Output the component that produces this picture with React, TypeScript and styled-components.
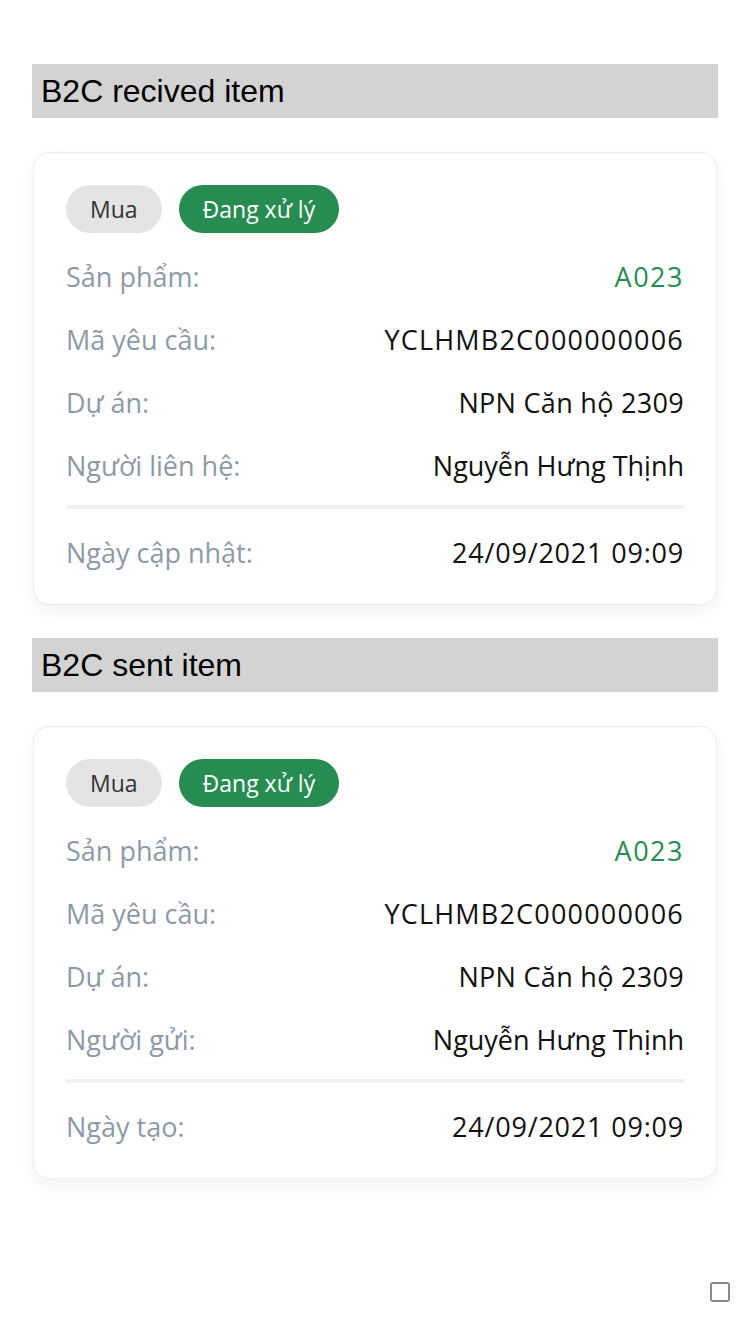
import React from "react";
import styled, { createGlobalStyle } from "styled-components";

const Global = createGlobalStyle`
  html, body { margin: 0; padding: 0; background: #fff; }
  body { font-family: "Open Sans", "Noto Sans", sans-serif; }
`;

const Page = styled.div`
  width: 750px;
  min-height: 1334px;
  box-sizing: border-box;
  padding: 64px 32px 0 32px;
  display: flex;
  flex-direction: column;
`;

const SectionTitle = styled.div`
  height: 54px;
  background: #d3d3d3;
  display: flex;
  align-items: center;
  padding-left: 9px;
  font-family: "Liberation Sans", Arial, sans-serif;
  font-size: 32px;
  color: #000;
`;

const Card = styled.div`
  margin: 34px 1px 33px 1px;
  background: #fff;
  border: 1px solid #ececec;
  border-radius: 16px;
  box-shadow: 0 6px 16px rgba(30, 40, 80, 0.06);
  padding: 32px 32px 20px 32px;
  display: flex;
  flex-direction: column;
`;

const Tags = styled.div`
  display: flex;
  gap: 17px;
  margin-bottom: 12px;
`;

const Tag = styled.div<{ $active?: boolean }>`
  height: 48px;
  border-radius: 24px;
  padding: 0 24px;
  display: flex;
  align-items: center;
  font-size: 23px;
  background: ${(p) => (p.$active ? "#268c51" : "#e4e4e4")};
  color: ${(p) => (p.$active ? "#fff" : "#333")};
`;

const Row = styled.div`
  height: 63px;
  display: flex;
  align-items: center;
  justify-content: space-between;
  font-size: 27px;
`;

const Label = styled.span`
  color: #8c9aa8;
`;

const Value = styled.span<{ $green?: boolean; $spacing?: number }>`
  color: ${(p) => (p.$green ? "#268c51" : "#111")};
  letter-spacing: ${(p) => p.$spacing ?? 0}px;
`;

const Divider = styled.div`
  height: 4px;
  background: #f1f1f1;
  margin: 8px 0 12px 0;
`;

const CheckBox = styled.div`
  position: fixed;
  right: 20px;
  bottom: 32px;
  width: 16px;
  height: 16px;
  border: 2px solid #8a8a8a;
  border-radius: 3px;
`;

type Item = { title: string; person: string; dateLabel: string };

const items: Item[] = [
  { title: "B2C recived item", person: "Người liên hệ:", dateLabel: "Ngày cập nhật:" },
  { title: "B2C sent item", person: "Người gửi:", dateLabel: "Ngày tạo:" },
];

export default function App() {
  return (
    <>
      <Global />
      <Page>
        {items.map((it) => (
          <React.Fragment key={it.title}>
            <SectionTitle>{it.title}</SectionTitle>
            <Card>
              <Tags>
                <Tag>Mua</Tag>
                <Tag $active>Đang xử lý</Tag>
              </Tags>
              <Row>
                <Label>Sản phẩm:</Label>
                <Value $green $spacing={1.5}>A023</Value>
              </Row>
              <Row>
                <Label>Mã yêu cầu:</Label>
                <Value $spacing={1.2}>YCLHMB2C000000006</Value>
              </Row>
              <Row>
                <Label>Dự án:</Label>
                <Value $spacing={0.3}>NPN Căn hộ 2309</Value>
              </Row>
              <Row>
                <Label>{it.person}</Label>
                <Value>Nguyễn Hưng Thịnh</Value>
              </Row>
              <Divider />
              <Row>
                <Label>{it.dateLabel}</Label>
                <Value $spacing={0.8}>24/09/2021 09:09</Value>
              </Row>
            </Card>
          </React.Fragment>
        ))}
      </Page>
      <CheckBox />
    </>
  );
}
